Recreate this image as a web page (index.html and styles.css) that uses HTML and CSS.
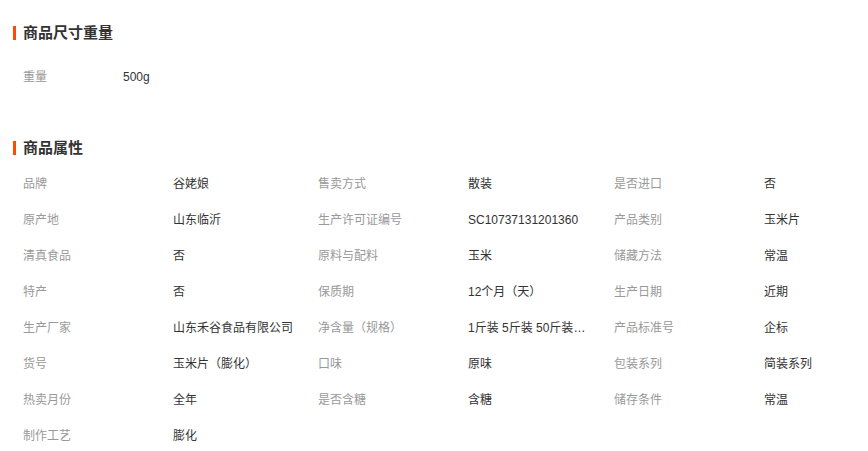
FILE: index.html
```html
<!DOCTYPE html>
<html lang="zh-CN">
<head>
    <meta charset="utf-8"/>
    <title>商品参数</title>
    <link rel="stylesheet" href="styles.css">
</head>
<body>
<div class="detailBox">
    <div class="detail-section">
        <h3 class="detail-title">商品尺寸重量</h3>
        <ul class="sizeList">
            <li><span class="attr-name">重量</span><span class="attr-value">500g</span></li>
        </ul>
    </div>
    <div class="detail-section">
        <h3 class="detail-title attrTitle">商品属性</h3>
        <ul class="attrList">
            <li class="attr-name">品牌</li><li class="attr-value">谷姥娘</li>
            <li class="attr-name">售卖方式</li><li class="attr-value">散装</li>
            <li class="attr-name">是否进口</li><li class="attr-value">否</li>

            <li class="attr-name">原产地</li><li class="attr-value">山东临沂</li>
            <li class="attr-name">生产许可证编号</li><li class="attr-value">SC10737131201360</li>
            <li class="attr-name">产品类别</li><li class="attr-value">玉米片</li>

            <li class="attr-name">清真食品</li><li class="attr-value">否</li>
            <li class="attr-name">原料与配料</li><li class="attr-value">玉米</li>
            <li class="attr-name">储藏方法</li><li class="attr-value">常温</li>

            <li class="attr-name">特产</li><li class="attr-value">否</li>
            <li class="attr-name">保质期</li><li class="attr-value">12个月（天）</li>
            <li class="attr-name">生产日期</li><li class="attr-value">近期</li>

            <li class="attr-name">生产厂家</li><li class="attr-value">山东禾谷食品有限公司</li>
            <li class="attr-name">净含量（规格）</li><li class="attr-value" title="1斤装 5斤装 50斤装 100斤装">1斤装 5斤装 50斤装 100斤装</li>
            <li class="attr-name">产品标准号</li><li class="attr-value">企标</li>

            <li class="attr-name">货号</li><li class="attr-value">玉米片（膨化）</li>
            <li class="attr-name">口味</li><li class="attr-value">原味</li>
            <li class="attr-name">包装系列</li><li class="attr-value">简装系列</li>

            <li class="attr-name">热卖月份</li><li class="attr-value">全年</li>
            <li class="attr-name">是否含糖</li><li class="attr-value">含糖</li>
            <li class="attr-name">储存条件</li><li class="attr-value">常温</li>

            <li class="attr-name">制作工艺</li><li class="attr-value">膨化</li>
        </ul>
    </div>
</div>
</body>
</html>
```

FILE: styles.css
```css
* {
    margin: 0;
    padding: 0;
    border: 0;
}

body {
    font: 12px/1.5 "Liberation Sans", "Noto Sans CJK SC", sans-serif;
    color: #333;
    background: #fff;
}

ul li {
    list-style: none;
}

.detailBox {
    padding: 26px 0 0 13px;
}

.detail-title {
    border-left: 3px solid #ff4a00;
    padding-left: 7px;
    font-size: 15px;
    line-height: 14px;
    font-weight: bold;
    color: #333;
}

.sizeList {
    padding: 19px 0 0 10px;
}

.sizeList li {
    display: flex;
    line-height: 36px;
}

.sizeList .attr-name {
    width: 100px;
}

.attrTitle {
    margin-top: 46px;
}

.attrList {
    display: grid;
    grid-template-columns: 150px 145px 150px 146px 150px 1fr;
    padding: 11px 0 0 10px;
    line-height: 36px;
}

.attr-name {
    color: #999;
}

.attr-value {
    color: #333;
    max-width: 120px;
    white-space: nowrap;
    overflow: hidden;
    text-overflow: ellipsis;
}
```
